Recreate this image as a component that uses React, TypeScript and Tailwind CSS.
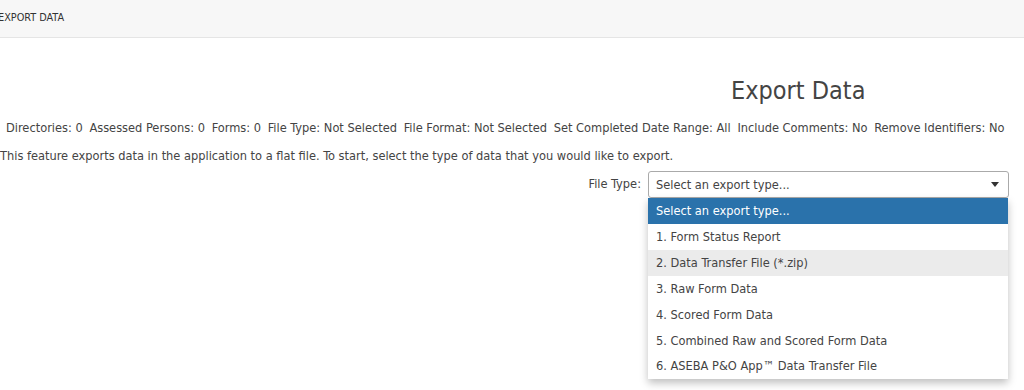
import React from 'react';

const stats: [string, string][] = [
  ['Directories', '0'],
  ['Assessed Persons', '0'],
  ['Forms', '0'],
  ['File Type', 'Not Selected'],
  ['File Format', 'Not Selected'],
  ['Set Completed Date Range', 'All'],
  ['Include Comments', 'No'],
  ['Remove Identifiers', 'No'],
];

const options = [
  '1. Form Status Report',
  '2. Data Transfer File (*.zip)',
  '3. Raw Form Data',
  '4. Scored Form Data',
  '5. Combined Raw and Scored Form Data',
  '6. ASEBA P&O App™ Data Transfer File',
];

export default function App() {
  return (
    <div
      className="min-h-[390px] bg-white text-[#333]"
      style={{ fontFamily: '"DejaVu Sans Condensed", "DejaVu Sans", sans-serif' }}
    >
      {/* Top bar */}
      <div className="flex h-[38px] items-center border-b border-[#e5e5e5] bg-[#f7f7f7]">
        <span className="-ml-[2px] text-[10.8px] uppercase text-[#333]">Export Data</span>
      </div>

      <div className="pl-[6px] pr-[15px]">
        <h1 className="mt-[38px] pl-[725px] text-[25px] leading-[30px] text-[#444]">Export Data</h1>

        <div className="mt-[14px] flex gap-[6.7px] text-[12.7px] leading-[16px] text-[#444]">
          {stats.map(([k, v]) => (
            <span key={k} className="whitespace-nowrap">
              {k}: {v}
            </span>
          ))}
        </div>

        <p className="-ml-[6px] mt-[12px] text-[12.7px] leading-[16px] text-[#444]">
          This feature exports data in the application to a flat file. To start, select the type of data that you
          would like to export.
        </p>

        <div className="mt-[7px] flex items-start justify-end">
          <label className="mr-[7px] mt-[5px] text-[12.7px] leading-[16px] text-[#444]">File Type:</label>
          <div className="relative w-[361px]">
            <div className="flex h-[27px] items-center justify-between rounded-[3px] border border-[#aaa] bg-white pl-[7px] pr-[9px] text-[12.7px] text-[#444]">
              <span>Select an export type...</span>
              <svg width="8" height="5" viewBox="0 0 8 5" aria-hidden="true">
                <path d="M0 0h8L4 5z" fill="#333" />
              </svg>
            </div>
            <ul className="absolute left-0 right-[1px] top-[27px] bg-white text-[12.7px] text-[#444] shadow-[0_4px_8px_rgba(0,0,0,0.25)]">
              <li className="flex h-[26px] items-center bg-[#2a72ab] pl-[8px] text-white">Select an export type...</li>
              {options.map((o, i) => (
                <li
                  key={o}
                  className={
                    'flex h-[25.8px] items-center pl-[8px] ' + (i === 1 ? 'bg-[#ebebeb]' : 'bg-white')
                  }
                >
                  {o}
                </li>
              ))}
            </ul>
          </div>
        </div>
      </div>
    </div>
  );
}
